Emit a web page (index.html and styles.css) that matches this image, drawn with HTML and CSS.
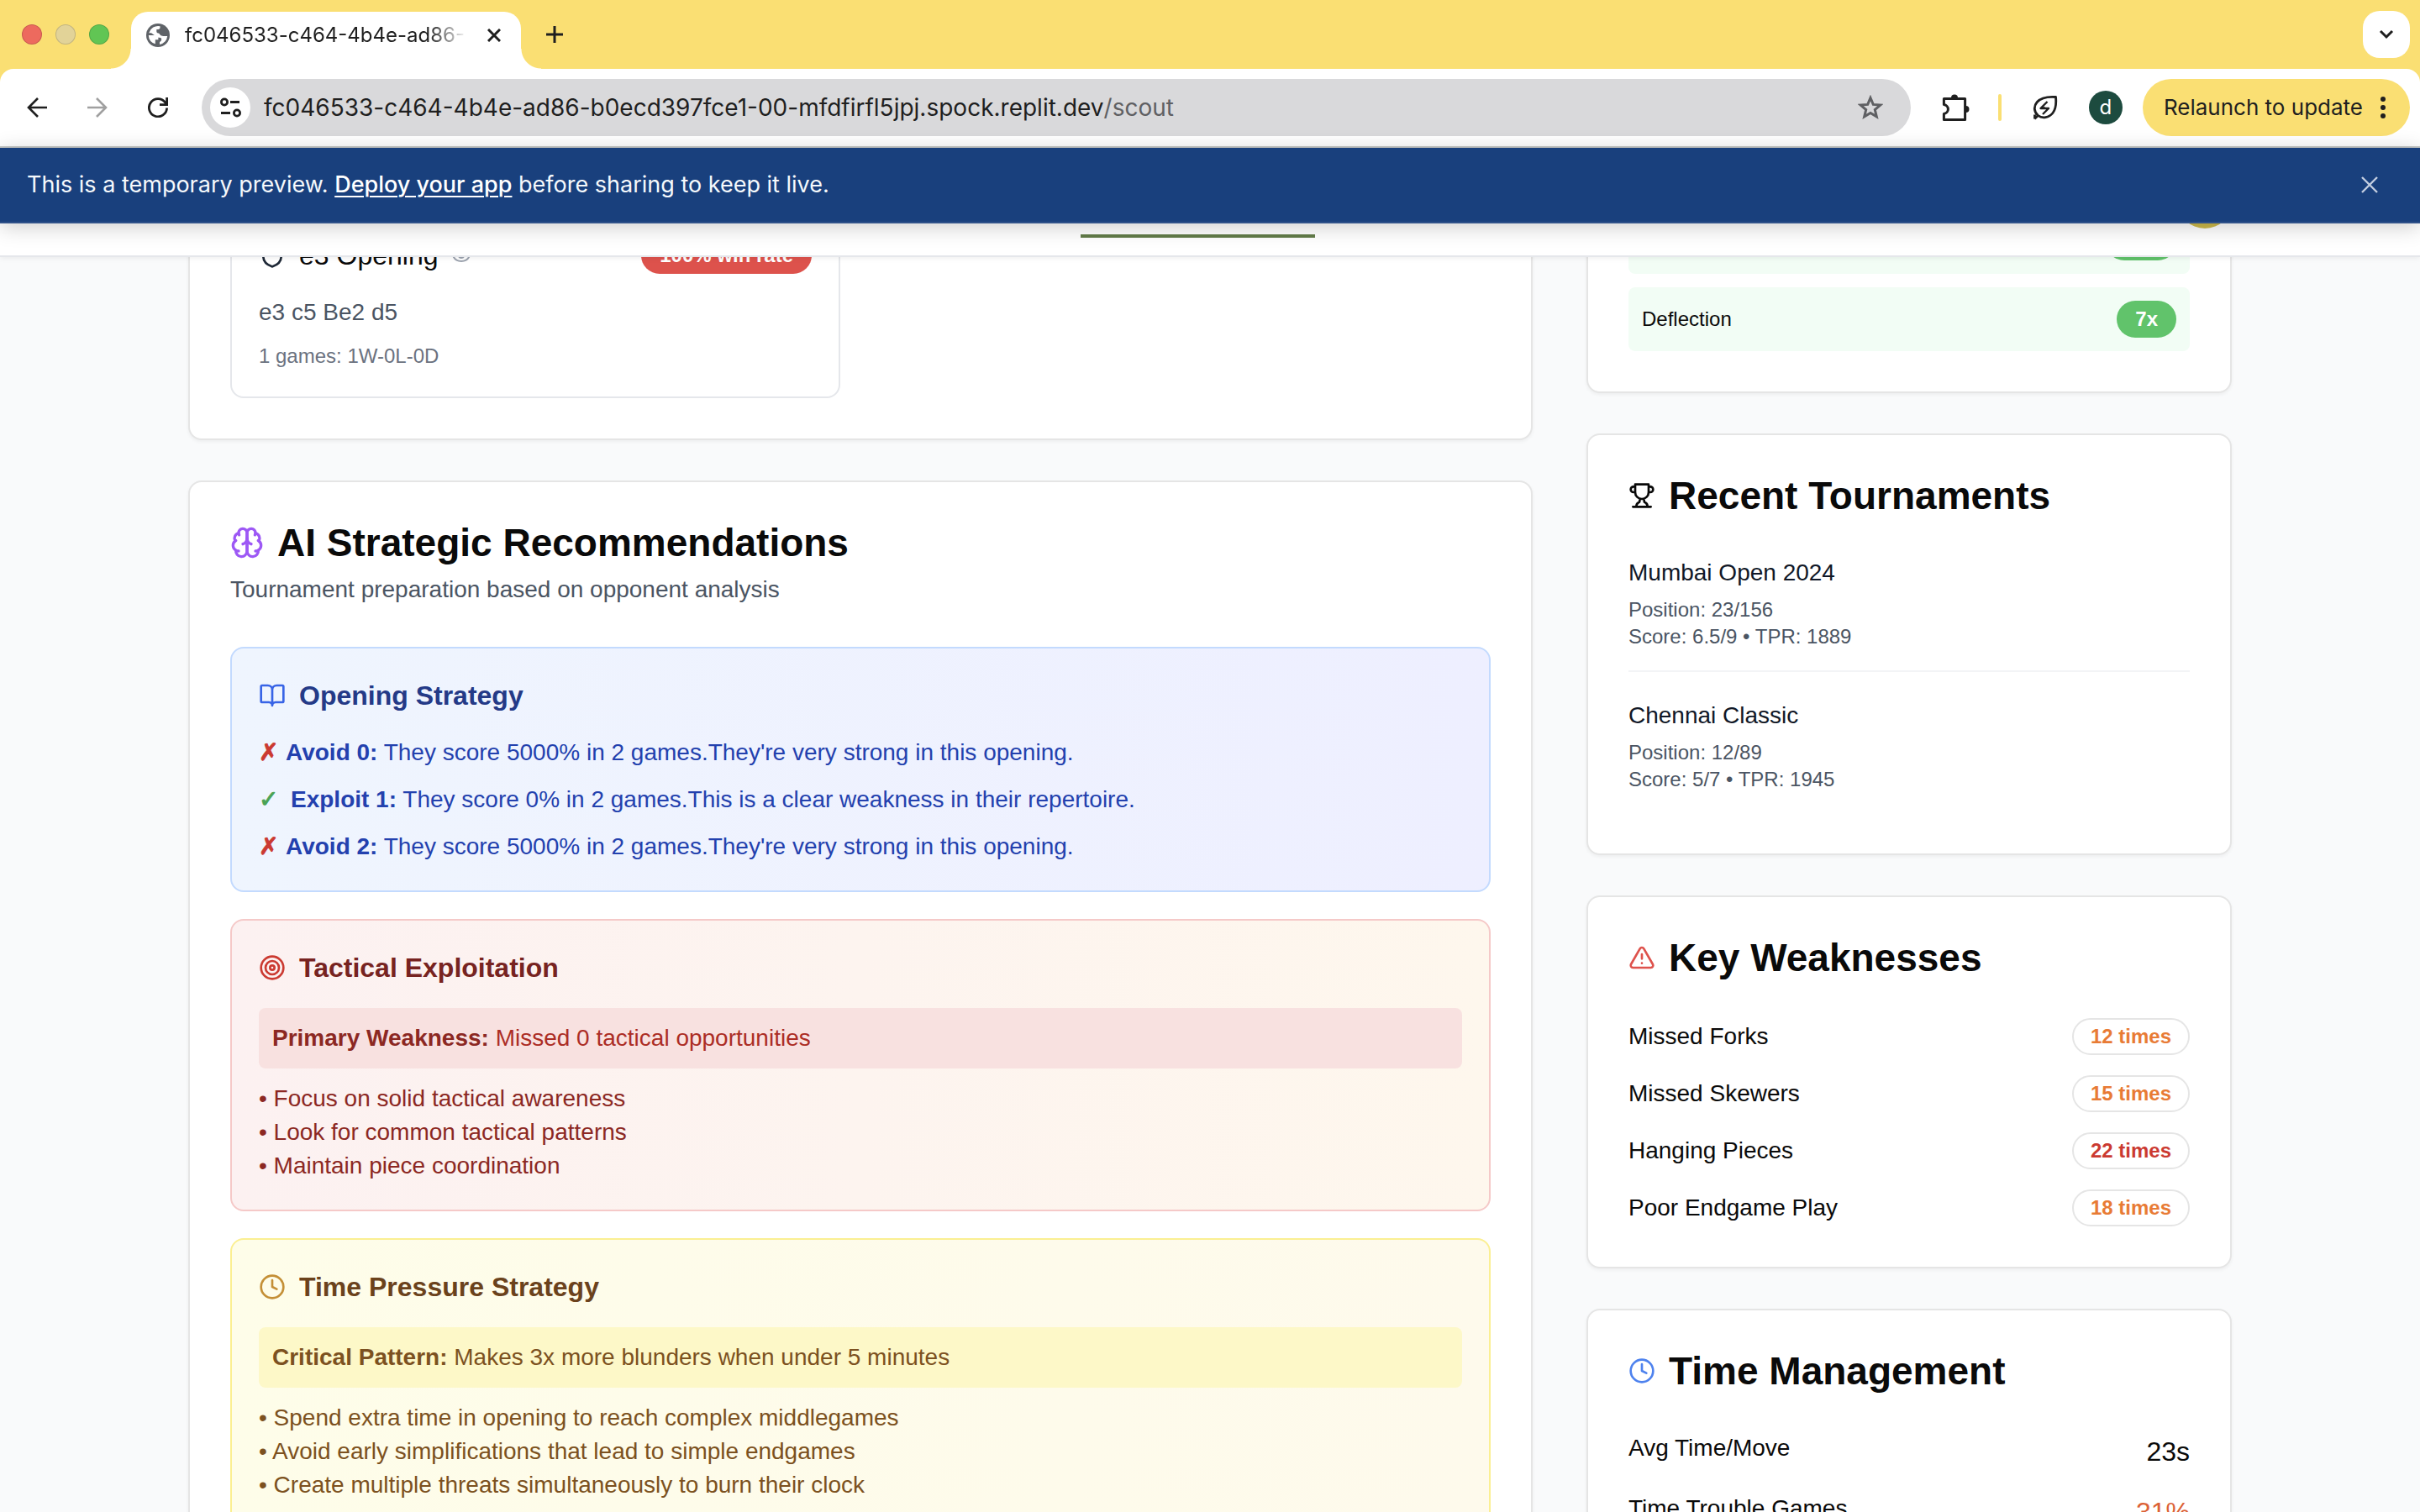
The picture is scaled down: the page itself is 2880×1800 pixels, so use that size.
FILE: index.html
```html
<!DOCTYPE html>
<html lang="en">
<head>
<meta charset="utf-8">
<meta name="viewport" content="width=device-width, initial-scale=1">
<title>Opponent Scout</title>
<link rel="stylesheet" href="styles.css">
</head>
<body>
<div class="window">
  <div class="tab-strip">
    <div class="lights"><span class="light light-close"></span><span class="light light-min"></span><span class="light light-max"></span></div>
    <div class="tab">
      <svg class="globe" viewBox="0 0 28 28" aria-hidden="true"><circle cx="14" cy="14" r="14" fill="#5f6368"/><path d="M2.800 14h7c3 0 4.600 1.600 4.600 3.600v1.600h-3.600v5.100a11.300 11.300 0 0 1-8-10.300z" fill="#fff"/><path d="M16.500 3.200v1.600c0 1.300-1 2.200-2.200 2.200h-2v2.400c0 1.500 1.400 1.800 2.400 2.200 2 .8 1.600 2.600 3.400 2.800 1.600.2 2.600.6 4.400.6h2.700a11.300 11.300 0 0 1-9.200 10v-3.100c1.400-.4 2.200-1.600 2.200-3.200 0-1.300-.8-2-2.200-2h-1.600c-1.600 0-3-1-4.200-2.400L6 11.200H3.300A11.300 11.300 0 0 1 16.500 3.200z" fill="#fff"/></svg>
      <span class="tab-title">fc046533-c464-4b4e-ad86-</span>
      <button class="plain tab-close" aria-label="Close tab"><svg width="16" height="16" viewBox="0 0 16 16" fill="none" stroke="#1f1f1f" stroke-width="3"><path d="M1 1l14 14M15 1L1 15"/></svg></button>
    </div>
    <button class="plain new-tab" aria-label="New tab"><svg width="20" height="20" viewBox="0 0 20 20" fill="none" stroke="#1f1f1f" stroke-width="3"><path d="M10 0v20M0 10h20"/></svg></button>
    <button class="plain tab-search" aria-label="Search tabs"><svg width="18" height="12" viewBox="0 0 18 12" fill="none" stroke="#1f1f1f" stroke-width="3"><path d="M2 2l7 7 7-7"/></svg></button>
  </div>
  <div class="toolbar">
    <div class="nav-buttons">
      <button class="plain tool" aria-label="Back"><svg width="24" height="24" viewBox="0 0 24 24" fill="none" stroke="#1f1f1f" stroke-width="2.600"><path d="M24 12H2M13 1L2 12l11 11"/></svg></button>
      <button class="plain tool" aria-label="Forward"><svg width="24" height="24" viewBox="0 0 24 24" fill="none" stroke="#a0a0a0" stroke-width="2.600"><path d="M0 12h22M11 1l11 11-11 11"/></svg></button>
      <button class="plain tool" aria-label="Reload"><svg width="24" height="24" viewBox="0 0 24 24" fill="none" stroke="#1f1f1f" stroke-width="2.800"><path d="M22.600 12.500A10.600 10.600 0 1 1 20.600 6l2 2.500M22.600 0v8.600H14"/></svg></button>
    </div>
    <div class="address">
      <button class="plain site-info" aria-label="Site information"><svg width="26" height="24" viewBox="0 0 26 24" fill="none" stroke="#1f1f1f" stroke-width="2.800"><circle cx="6" cy="5.500" r="3.600"/><path d="M13 5.500h11M2 18.500h11"/><circle cx="21" cy="18.500" r="3.600"/></svg></button>
      <input class="url" type="text" aria-label="Address" value="fc046533-c464-4b4e-ad86-b0ecd397fce1-00-mfdfirfl5jpj.spock.replit.dev"><span class="url-path">/scout</span>
      <button class="plain star" aria-label="Bookmark"><svg width="30" height="30" viewBox="0 0 30 30" fill="none" stroke="#5f6063" stroke-width="3"><path d="M15 3.500l3.300 7.900 8.500.7-6.500 5.500 2 8.300L15 21.500l-7.300 4.400 2-8.300-6.500-5.500 8.500-.7z"/></svg></button>
    </div>
    <button class="plain tool" aria-label="Extensions"><svg width="36" height="36" viewBox="0 0 36 36" fill="none" stroke="#1f1f1f" stroke-width="3" stroke-linejoin="round"><path d="M5.400 7.400h25.200v25.200H5.400v-7.200c3-.4 5-2.800 5-5.400s-2-5-5-5.400z"/><path d="M14 6.500a4 4 0 0 1 8 0zM31.500 16a4 4 0 0 1 0 8z" fill="#1f1f1f" stroke="none"/></svg></button>
    <span class="tool-divider"></span>
    <button class="plain tool" aria-label="Energy saver"><svg width="30" height="30" viewBox="0 0 30 30" fill="none" stroke="#1f1f1f" stroke-width="2.800" stroke-linejoin="round"><path d="M27.500 2.500c.8 8 0 14.500-3.500 19-4.500 5.600-12.500 7-17.500 3s-5.600-11-1.200-16C9.500 3.600 17 1.800 27.500 2.500zM6.500 24.500L2.300 28.500M2.500 23.500v5"/><path d="M17.500 8l-8 8h9.500l-7 7M19 16h-4M10 15.500h5" stroke-width="2.400"/></svg></button>
    <button class="plain profile" aria-label="Profile">d</button>
    <button class="plain relaunch"><span>Relaunch to update</span><svg width="8" height="28" viewBox="0 0 8 28" fill="#1f1f1f" aria-hidden="true"><circle cx="4" cy="4" r="3"/><circle cx="4" cy="14" r="3"/><circle cx="4" cy="24" r="3"/></svg></button>
  </div>

  <div class="banner">
    <p class="banner-text">This is a temporary preview. <a href="#deploy">Deploy your app</a> before sharing to keep it live.</p>
    <button class="plain banner-close" aria-label="Dismiss"><svg width="20" height="20" viewBox="0 0 20 20" fill="none" stroke="#c3cee0" stroke-width="2.400"><path d="M1 1l18 18M19 1L1 19"/></svg></button>
  </div>
  <header class="site-header"><span class="active-tab"></span><span class="user"></span></header>

  <div class="page">
    <main class="columns">
      <div class="column">
        <section class="card">
          <div class="openings">
            <article class="opening">
              <div class="opening-head">
                <svg class="icon icon-md slate" viewBox="0 0 24 24"><path d="M20 13c0 5-3.500 7.500-7.660 8.950a1 1 0 0 1-.67-.01C7.500 20.500 4 18 4 13V6a1 1 0 0 1 1-1c2 0 4.500-1.200 6.240-2.720a1.170 1.170 0 0 1 1.520 0C14.510 3.810 17 5 19 5a1 1 0 0 1 1 1z"/></svg>
                <h3 class="opening-name">e3 Opening</h3>
                <svg class="icon icon-sm gray" viewBox="0 0 24 24"><path d="M2.062 12.348a1 1 0 0 1 0-.696 10.750 10.750 0 0 1 19.876 0 1 1 0 0 1 0 .696 10.750 10.750 0 0 1-19.876 0"/><circle cx="12" cy="12" r="3"/></svg>
                <span class="badge badge-red push">100% win rate</span>
              </div>
              <p class="moves">e3 c5 Be2 d5</p>
              <p class="record">1 games: 1W-0L-0D</p>
            </article>
          </div>
        </section>

        <section class="card">
          <h2 class="card-title"><svg class="icon icon-lg purple" viewBox="0 0 24 24"><path d="M12 5a3 3 0 1 0-5.997.125 4 4 0 0 0-2.526 5.770 4 4 0 0 0 .556 6.588A4 4 0 1 0 12 18Z"/><path d="M12 5a3 3 0 1 1 5.997.125 4 4 0 0 1 2.526 5.770 4 4 0 0 1-.556 6.588A4 4 0 1 1 12 18Z"/><path d="M15 13a4.500 4.500 0 0 1-3-4 4.500 4.500 0 0 1-3 4"/><path d="M17.599 6.500a3 3 0 0 0 .399-1.375M6.003 5.125A3 3 0 0 0 6.401 6.500M3.477 10.896a4 4 0 0 1 .585-.396M19.938 10.500a4 4 0 0 1 .585.396M6 18a4 4 0 0 1-1.967-.516M19.967 17.484A4 4 0 0 1 18 18"/></svg>AI Strategic Recommendations</h2>
          <p class="card-description">Tournament preparation based on opponent analysis</p>
          <div class="panels">
            <section class="panel panel-blue">
              <h3 class="panel-title"><svg class="icon icon-md" viewBox="0 0 24 24"><path d="M12 7v14M3 18a1 1 0 0 1-1-1V4a1 1 0 0 1 1-1h5a4 4 0 0 1 4 4 4 4 0 0 1 4-4h5a1 1 0 0 1 1 1v13a1 1 0 0 1-1 1h-6a3 3 0 0 0-3 3 3 3 0 0 0-3-3z"/></svg>Opening Strategy</h3>
              <ul class="advice">
                <li><span class="mark cross">✗</span><span><strong>Avoid 0:</strong> They score 5000% in 2 games.They're very strong in this opening.</span></li>
                <li><span class="mark tick">✓</span><span><strong>Exploit 1:</strong> They score 0% in 2 games.This is a clear weakness in their repertoire.</span></li>
                <li><span class="mark cross">✗</span><span><strong>Avoid 2:</strong> They score 5000% in 2 games.They're very strong in this opening.</span></li>
              </ul>
            </section>
            <section class="panel panel-red">
              <h3 class="panel-title"><svg class="icon icon-md" viewBox="0 0 24 24"><circle cx="12" cy="12" r="10"/><circle cx="12" cy="12" r="6"/><circle cx="12" cy="12" r="2"/></svg>Tactical Exploitation</h3>
              <p class="callout"><strong>Primary Weakness:</strong> Missed 0 tactical opportunities</p>
              <ul class="bullets">
                <li>• Focus on solid tactical awareness</li>
                <li>• Look for common tactical patterns</li>
                <li>• Maintain piece coordination</li>
              </ul>
            </section>
            <section class="panel panel-yellow">
              <h3 class="panel-title"><svg class="icon icon-md" viewBox="0 0 24 24"><circle cx="12" cy="12" r="10"/><path d="M12 6v6l4 2"/></svg>Time Pressure Strategy</h3>
              <p class="callout"><strong>Critical Pattern:</strong> Makes 3x more blunders when under 5 minutes</p>
              <ul class="bullets">
                <li>• Spend extra time in opening to reach complex middlegames</li>
                <li>• Avoid early simplifications that lead to simple endgames</li>
                <li>• Create multiple threats simultaneously to burn their clock</li>
              </ul>
            </section>
          </div>
        </section>
      </div>

      <aside class="column sidebar">
        <section class="card">
          <ul class="tactics">
            <li><span class="badge badge-green badge-wide push"></span></li>
            <li>Deflection<span class="badge badge-green push">7x</span></li>
          </ul>
        </section>

        <section class="card">
          <h2 class="card-title side-title"><svg class="icon icon-md" viewBox="0 0 24 24"><path d="M6 9H4.500a2.500 2.500 0 0 1 0-5H6M18 9h1.500a2.500 2.500 0 0 0 0-5H18M4 22h16M10 14.660V17c0 .55-.47.98-.97 1.210C7.850 18.750 7 20.240 7 22M14 14.660V17c0 .55.47.98.970 1.210C16.150 18.750 17 20.240 17 22M18 2H6v7a6 6 0 0 0 12 0V2Z"/></svg>Recent Tournaments</h2>
          <ul class="tournaments">
            <li><h3>Mumbai Open 2024</h3><p>Position: 23/156</p><p>Score: 6.5/9 • TPR: 1889</p></li>
            <li><h3>Chennai Classic</h3><p>Position: 12/89</p><p>Score: 5/7 • TPR: 1945</p></li>
          </ul>
        </section>

        <section class="card">
          <h2 class="card-title side-title"><svg class="icon icon-md red" viewBox="0 0 24 24"><path d="m21.730 18-8-14a2 2 0 0 0-3.480 0l-8 14A2 2 0 0 0 4 21h16a2 2 0 0 0 1.730-3M12 9v4M12 17h.01"/></svg>Key Weaknesses</h2>
          <ul class="rows">
            <li>Missed Forks<span class="badge badge-outline orange push">12 times</span></li>
            <li>Missed Skewers<span class="badge badge-outline orange push">15 times</span></li>
            <li>Hanging Pieces<span class="badge badge-outline deep-red push">22 times</span></li>
            <li>Poor Endgame Play<span class="badge badge-outline orange push">18 times</span></li>
          </ul>
        </section>

        <section class="card">
          <h2 class="card-title side-title"><svg class="icon icon-md blue" viewBox="0 0 24 24"><circle cx="12" cy="12" r="10"/><path d="M12 6v6l4 2"/></svg>Time Management</h2>
          <ul class="rows stats">
            <li>Avg Time/Move<span class="stat push">23s</span></li>
            <li>Time Trouble Games<span class="stat late push">31%</span></li>
          </ul>
        </section>
      </aside>
    </main>
  </div>
</div>
</body>
</html>
```
FILE: styles.css
```css
* { box-sizing: border-box; }

body {
  margin: 0;
  background: #f9fafb;
  color: #0a0a0a;
  font-family: "Liberation Sans", Arial, Helvetica, sans-serif;
  font-size: 28px;
  line-height: 40px;
}

h2, h3, p, ul { margin: 0; padding: 0; }
ul { list-style: none; }

.plain {
  display: flex;
  align-items: center;
  justify-content: center;
  margin: 0;
  padding: 0;
  border: 0;
  background: none;
  color: inherit;
  font: inherit;
}

.push { margin-left: auto; }

.window {
  display: flex;
  flex-direction: column;
  height: 100vh;
  overflow: hidden;
}

/* Browser chrome */
.tab-strip,
.toolbar,
.banner {
  flex: none;
  font-family: Inter, Roboto, sans-serif;
}

.tab-strip {
  display: flex;
  align-items: center;
  height: 98px;
  margin-bottom: -16px;
  padding: 0 12px 16px 26px;
  background: #fadf73;
}

.lights { display: flex; gap: 16px; }

.light {
  width: 24px;
  height: 24px;
  border: 1px solid rgba(0, 0, 0, 0.15);
  border-radius: 50%;
}

.light-close { background: #ed6a5e; }
.light-min { background: #e2d398; }
.light-max { background: #61c554; }

.tab {
  position: relative;
  display: flex;
  align-items: center;
  width: 464px;
  height: 68px;
  margin: 14px 0 0 26px;
  padding: 0 24px 12px 18px;
  border-radius: 20px 20px 0 0;
  background: #fff;
}

.tab::before,
.tab::after {
  content: "";
  position: absolute;
  bottom: 0;
  width: 24px;
  height: 24px;
}

.tab::before {
  right: 100%;
  background: radial-gradient(circle at 0 0, transparent 23px, #fff 24px);
}

.tab::after {
  left: 100%;
  background: radial-gradient(circle at 100% 0, transparent 23px, #fff 24px);
}

.globe { flex: none; width: 28px; height: 28px; }

.tab-title {
  flex: 1;
  margin: 0 24px 0 18px;
  white-space: nowrap;
  color: #1f1f1f;
  font-size: 24px;
  line-height: 32px;
  -webkit-mask-image: linear-gradient(to right, #000 86%, transparent);
  mask-image: linear-gradient(to right, #000 86%, transparent);
}

.new-tab { width: 56px; height: 56px; margin-left: 12px; }

.tab-search {
  width: 56px;
  height: 56px;
  margin-left: auto;
  border-radius: 20px;
  background: #fff;
}

.toolbar {
  display: flex;
  align-items: center;
  gap: 24px;
  height: 94px;
  padding: 0 12px 0 16px;
  border-bottom: 2px solid #c8cac8;
  border-radius: 16px 16px 0 0;
  background: #fff;
}

.nav-buttons { display: flex; gap: 16px; }
.tool { width: 56px; height: 56px; }

.address {
  display: flex;
  flex: 1;
  align-items: center;
  height: 68px;
  padding: 0 24px 0 10px;
  border-radius: 34px;
  background: #d9d9db;
  color: #1f1f1f;
  font-size: 28px;
}

.site-info {
  flex: none;
  width: 48px;
  height: 48px;
  margin-right: 16px;
  border-radius: 50%;
  background: #fff;
}

.url {
  field-sizing: content;
  padding: 0;
  border: 0;
  outline: 0;
  background: none;
  color: inherit;
  font: inherit;
}

.url-path { color: #5f6063; }
.star { width: 48px; height: 48px; margin-left: auto; }

.tool-divider {
  width: 4px;
  height: 32px;
  border-radius: 2px;
  background: #fadf73;
}

.profile {
  width: 40px;
  height: 40px;
  border-radius: 50%;
  background: #1d4b3f;
  color: #fff;
  font-size: 24px;
}

.relaunch {
  gap: 20px;
  height: 68px;
  padding: 0 28px 0 25px;
  border-radius: 34px;
  background: #fadf73;
  color: #1f1f1f;
  font-size: 26px;
}

/* Preview banner */
.banner {
  position: relative;
  z-index: 3;
  display: flex;
  align-items: center;
  justify-content: space-between;
  height: 90px;
  padding: 0 50px 0 32px;
  border-bottom: 2px solid #2f5189;
  background: #19407d;
  box-shadow: 0 4px 24px rgba(0, 0, 0, 0.2);
  color: #f5f9fc;
  font-size: 27px;
}

.banner a {
  color: #fff;
  font-weight: 500;
  text-decoration: underline;
  text-decoration-thickness: 2px;
  text-underline-offset: 4px;
}

/* App header, mostly tucked under the banner */
.site-header {
  position: relative;
  z-index: 2;
  flex: none;
  height: 40px;
  border-bottom: 2px solid #e5e7eb;
  background: #fff;
  box-shadow: 0 2px 6px rgba(0, 0, 0, 0.06);
}

.active-tab {
  position: absolute;
  top: 13px;
  left: 1286px;
  width: 279px;
  height: 4px;
  background: #627c49;
}

.user {
  position: absolute;
  top: -58px;
  right: 224px;
  width: 64px;
  height: 64px;
  border-radius: 50%;
  background: #cdb94a;
}

/* Scouting report, scrolled part-way */
.page {
  flex: 1;
  min-height: 0;
  overflow: hidden;
}

.columns {
  display: grid;
  grid-template-columns: repeat(3, 1fr);
  align-items: start;
  gap: 64px;
  max-width: 2560px;
  margin: -110px auto 0;
  padding: 0 64px;
}

.column {
  display: flex;
  flex-direction: column;
  gap: 48px;
  grid-column: span 2;
}

.sidebar { grid-column: span 1; padding-top: 4px; }

.card {
  padding: 48px;
  border: 2px solid #e5e5e5;
  border-radius: 16px;
  background: #fff;
  box-shadow: 0 2px 4px rgba(0, 0, 0, 0.05);
}

.card-title {
  display: flex;
  align-items: center;
  gap: 16px;
  font-size: 46px;
  line-height: 48px;
}

.side-title { margin-bottom: 48px; }

.card-description {
  margin-top: 12px;
  color: #4b5563;
}

.icon {
  flex: none;
  fill: none;
  stroke: currentColor;
  stroke-width: 2;
  stroke-linecap: round;
  stroke-linejoin: round;
}

.icon-lg { width: 40px; height: 40px; }
.icon-md { width: 32px; height: 32px; }
.icon-sm { width: 24px; height: 24px; }

.purple { color: #9d58f5; }
.red { color: #de524c; }
.blue { color: #4e82ee; }
.gray { color: #9ca3af; }
.slate { color: #1f2937; }
.orange { color: #e87b35; }
.deep-red { color: #cb3a31; }

.badge {
  min-height: 44px;
  padding: 4px 20px;
  border: 2px solid transparent;
  border-radius: 22px;
  font-size: 24px;
  font-weight: 700;
  line-height: 32px;
}

.badge-wide { min-width: 84px; }
.badge-red { background: #dd524c; color: #fff; }
.badge-green { background: #61c36b; color: #fff; }
.badge-outline { border-color: #e5e5e5; }

/* Openings */
.openings {
  display: grid;
  grid-template-columns: 1fr 1fr;
  gap: 48px;
}

.opening {
  padding: 32px;
  border: 2px solid #e5e7eb;
  border-radius: 16px;
}

.opening-head {
  display: flex;
  align-items: center;
  gap: 16px;
  height: 48px;
  margin-bottom: 24px;
}

.opening-name {
  font-size: 32px;
  font-weight: 400;
  line-height: 48px;
}

.moves { margin-bottom: 16px; color: #4b5563; }
.record { color: #6b7280; font-size: 24px; line-height: 32px; }

/* Recommendation panels */
.panels {
  display: flex;
  flex-direction: column;
  gap: 32px;
  margin-top: 48px;
}

.panel {
  padding: 32px;
  border: 2px solid;
  border-radius: 16px;
}

.panel-title {
  display: flex;
  align-items: center;
  gap: 16px;
  margin-bottom: 24px;
  font-size: 32px;
  line-height: 48px;
}

.panel-blue {
  border-color: #c3dafe;
  background: linear-gradient(to right, #eff5fe, #eeefff);
  color: #2341ae;
}

.panel-blue .panel-title { color: #243a87; }
.panel-blue .icon { color: #3864e6; }

.panel-red {
  border-color: #f5c9c8;
  background: linear-gradient(to right, #fcf1f1, #fef7ed);
  color: #8c2823;
}

.panel-red .panel-title { color: #772321; }
.panel-red .icon { color: #cb3a31; }

.panel-yellow {
  border-color: #fbef92;
  background: linear-gradient(to right, #fefde9, #fefaec);
  color: #7c5120;
}

.panel-yellow .panel-title { color: #6b421c; }
.panel-yellow .icon { color: #c48f36; }

.advice {
  display: flex;
  flex-direction: column;
  gap: 16px;
}

.advice li { display: flex; gap: 16px; }

.mark {
  font-family: "DejaVu Sans", sans-serif;
  font-size: 28px;
  font-weight: 700;
  -webkit-text-stroke: 1px currentColor;
}

.cross { width: 16px; color: #cb3a31; }
.tick { width: 22px; color: #4aa354; }

.callout {
  margin-bottom: 16px;
  padding: 16px;
  border-radius: 8px;
}

.panel-red .callout { background: #f8e1e0; color: #ac2d25; }
.panel-red .callout strong { color: #8c2823; }
.panel-yellow .callout { background: #fdf8c8; }

/* Sidebar lists */
.tactics {
  display: flex;
  flex-direction: column;
  gap: 16px;
}

.tactics li {
  display: flex;
  align-items: center;
  padding: 16px;
  border-radius: 8px;
  background: #f2fdf5;
  font-size: 24px;
  line-height: 32px;
}

.tournaments {
  display: flex;
  flex-direction: column;
  gap: 32px;
}

.tournaments li {
  padding-bottom: 24px;
  border-bottom: 2px solid #f3f4f6;
}

.tournaments li:last-child { border-bottom: 0; }

.tournaments h3 {
  margin-bottom: 8px;
  color: #111827;
  font-size: 28px;
  font-weight: 400;
  line-height: 40px;
}

.tournaments p {
  color: #4b5563;
  font-size: 24px;
  line-height: 32px;
}

.rows {
  display: flex;
  flex-direction: column;
  gap: 24px;
}

.rows li { display: flex; align-items: center; }
.stats li { align-items: flex-start; }
.stat { font-size: 32px; line-height: 48px; }
.late { color: #dc6236; }
```
